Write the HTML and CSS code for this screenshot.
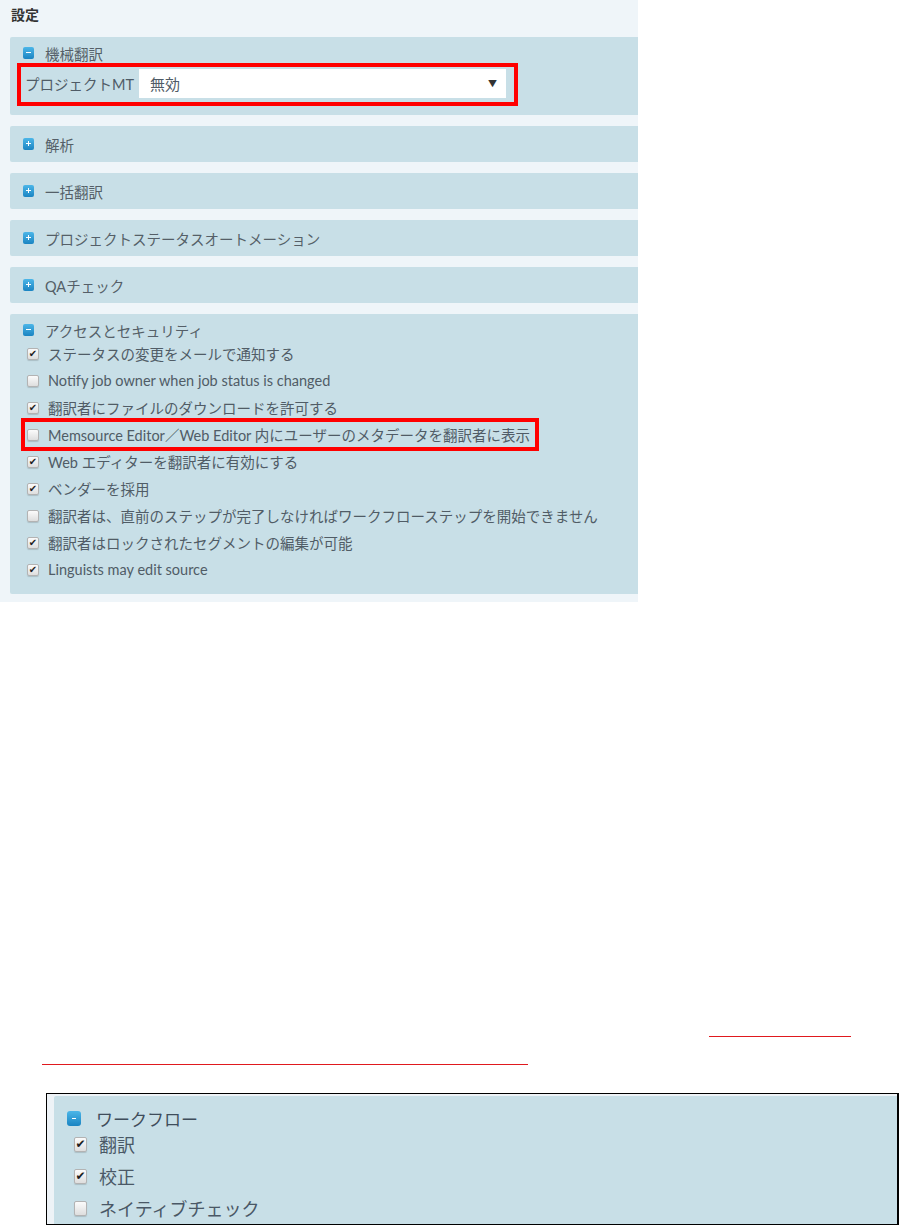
FILE: index.html
```html
<!DOCTYPE html>
<html>
<head>
    <title>設定</title>
    <link rel="stylesheet" href="styles.css">
</head>
<body>
    <div class="settings">
        <div class="title">設定</div>

        <div class="panel">
            <div class="panel-head open"><span class="toggle"></span>機械翻訳</div>
            <div class="mt-row">
                <span class="mt-label">プロジェクトMT</span>
                <div class="select"><span>無効</span><span class="arrow">▼</span></div>
            </div>
        </div>

        <div class="panel closed">
            <div class="panel-head"><span class="toggle plus"></span>解析</div>
        </div>
        <div class="panel closed">
            <div class="panel-head"><span class="toggle plus"></span>一括翻訳</div>
        </div>
        <div class="panel closed">
            <div class="panel-head"><span class="toggle plus"></span>プロジェクトステータスオートメーション</div>
        </div>
        <div class="panel closed">
            <div class="panel-head"><span class="toggle plus"></span>QAチェック</div>
        </div>

        <div class="panel last">
            <div class="panel-head open"><span class="toggle"></span>アクセスとセキュリティ</div>
            <div class="check"><span class="box on"></span>ステータスの変更をメールで通知する</div>
            <div class="check"><span class="box"></span>Notify job owner when job status is changed</div>
            <div class="check"><span class="box on"></span>翻訳者にファイルのダウンロードを許可する</div>
            <div class="check mark"><span class="box"></span>Memsource Editor／Web Editor 内にユーザーのメタデータを翻訳者に表示</div>
            <div class="check"><span class="box on"></span>Web エディターを翻訳者に有効にする</div>
            <div class="check"><span class="box on"></span>ベンダーを採用</div>
            <div class="check"><span class="box"></span>翻訳者は、直前のステップが完了しなければワークフローステップを開始できません</div>
            <div class="check"><span class="box on"></span>翻訳者はロックされたセグメントの編集が可能</div>
            <div class="check"><span class="box on"></span>Linguists may edit source</div>
        </div>
    </div>

    <div class="rule rule-a"></div>
    <div class="rule rule-b"></div>

    <div class="workflow">
        <div class="wf-panel">
            <div class="wf-head"><span class="toggle big"></span>ワークフロー</div>
            <div class="wf-check"><span class="box big on"></span>翻訳</div>
            <div class="wf-check"><span class="box big on"></span>校正</div>
            <div class="wf-check"><span class="box big"></span>ネイティブチェック</div>
        </div>
    </div>
</body>
</html>
```

FILE: styles.css
```css
body {
    margin: 0;
    background: #fff;
    font-family: Lato, "Noto Sans CJK JP", sans-serif;
    color: #4f5b66;
}
.settings {
    width: 638px;
    box-sizing: border-box;
    background: #eff5f9;
    padding: 6px 0 8px 10px;
}
.title {
    font-size: 14px;
    font-weight: bold;
    line-height: 18px;
    color: #333;
    padding-left: 1px;
    margin-bottom: 13px;
}
.panel {
    background: #c8dfe7;
    border-radius: 2px 0 0 2px;
    margin-bottom: 11px;
    padding-bottom: 9px;
}
.panel.closed {
    padding-bottom: 0;
}
.panel.last {
    margin-bottom: 0;
    padding-bottom: 11px;
}
.panel-head {
    display: flex;
    align-items: center;
    gap: 11px;
    height: 36px;
    padding-left: 13px;
    font-size: 14.5px;
    color: #555f68;
}
.panel-head.open {
    height: 20px;
    padding-top: 6px;
}
.toggle {
    position: relative;
    width: 11px;
    height: 12px;
    border-radius: 2px;
    background: linear-gradient(#4cb6e8, #1a84c2);
    flex-shrink: 0;
}
.toggle::before {
    content: "";
    position: absolute;
    left: 3px;
    top: 5px;
    width: 5px;
    height: 1px;
    background: #fff;
}
.toggle.plus::after {
    content: "";
    position: absolute;
    left: 5px;
    top: 3px;
    width: 1px;
    height: 5px;
    background: #fff;
}
.toggle.big {
    width: 14px;
    height: 15px;
    border-radius: 3px;
}
.toggle.big::before {
    left: 5px;
    top: 7px;
    width: 4px;
}

.mt-row {
    display: flex;
    align-items: center;
    gap: 9px;
    width: 481px;
    margin-left: 7px;
    padding: 2px 8px 4px 4px;
    border: 4px solid #f00;
}
.mt-label {
    flex-shrink: 0;
    width: 105px;
    white-space: nowrap;
    font-size: 14.5px;
}
.select {
    display: flex;
    align-items: center;
    justify-content: space-between;
    flex-shrink: 0;
    width: 367px;
    height: 29px;
    box-sizing: border-box;
    padding: 0 9px 0 11px;
    background: #fff;
    font-size: 15px;
}
.arrow {
    font-size: 9px;
    color: #333;
}

.check {
    display: flex;
    align-items: center;
    gap: 9px;
    width: fit-content;
    height: 27px;
    margin-left: 14px;
    padding: 0 6px 0 3px;
    font-size: 14.5px;
    white-space: nowrap;
    color: #505c66;
}
.check.mark {
    outline: 4px solid #f00;
    outline-offset: -1px;
}
.box {
    display: flex;
    align-items: center;
    justify-content: center;
    width: 10px;
    height: 10px;
    border: 1px solid #b3b3b3;
    border-radius: 2px;
    background: linear-gradient(#fbfbfb, #dedede);
    box-shadow: 0 1px 1px rgba(0, 0, 0, 0.15);
    flex-shrink: 0;
}
.box.on::before {
    content: "✔";
    font-family: "DejaVu Sans", sans-serif;
    font-size: 10px;
    line-height: 1;
    color: #1e1e1e;
}
.box.big {
    width: 11px;
    height: 13px;
}
.box.big.on::before {
    font-size: 12px;
}

.rule {
    height: 1px;
    background: #e0191e;
}
.rule-a {
    width: 142px;
    margin: 434px 0 0 709px;
}
.rule-b {
    width: 486px;
    margin: 27px 0 0 42px;
}

.workflow {
    width: 853px;
    box-sizing: border-box;
    margin: 28px 0 0 46px;
    border: 1px solid #000;
    border-right-width: 2px;
    background: #eef3f7;
    padding: 2px 0 0 7px;
}
.wf-panel {
    background: #c8dfe7;
    border-radius: 2px 0 0 0;
    padding-left: 13px;
}
.wf-head {
    display: flex;
    align-items: center;
    gap: 15px;
    height: 20px;
    padding-top: 12px;
    font-size: 17px;
    color: #3f4d5b;
}
.wf-check {
    display: flex;
    align-items: center;
    gap: 12px;
    height: 32px;
    padding-left: 7px;
    font-size: 18px;
    color: #4a5866;
}
```
